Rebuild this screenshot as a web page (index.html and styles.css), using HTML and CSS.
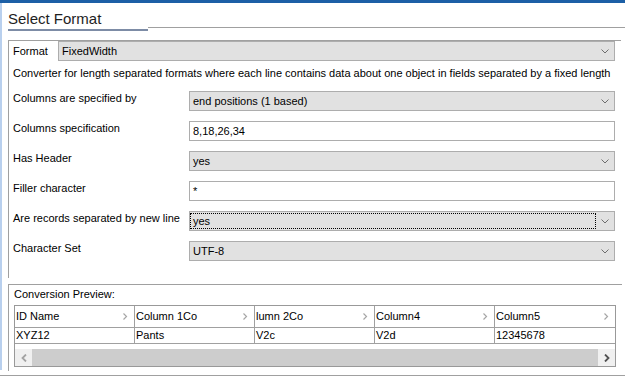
FILE: index.html
```html
<!DOCTYPE html>
<html lang="en">
<head>
    <meta charset="UTF-8">
    <title>Select Format</title>
    <link rel="stylesheet" href="styles.css">
</head>
<body>
    <div class="window">
        <div class="main">
            <div class="tabbar">
                <div class="tab">Select Format</div>
                <div class="tab-rest"></div>
            </div>

            <div class="panel">
                <div class="format-row">
                    <span class="format-label">Format</span>
                    <div class="select format-select">
                        <span class="value">FixedWidth</span>
                        <svg class="chev" width="8" height="5" viewBox="0 0 8 5"><polyline points="0.5,0.5 4,4 7.5,0.5" fill="none" stroke="#6d6d6d" stroke-width="1"/></svg>
                    </div>
                </div>
                <p class="desc">Converter for length separated formats where each line contains data about one object in fields separated by a fixed length</p>

                <div class="fields">
                    <span class="label">Columns are specified by</span>
                    <div class="select">
                        <span class="value">end positions (1 based)</span>
                        <svg class="chev" width="8" height="5" viewBox="0 0 8 5"><polyline points="0.5,0.5 4,4 7.5,0.5" fill="none" stroke="#6d6d6d" stroke-width="1"/></svg>
                    </div>

                    <span class="label">Columns specification</span>
                    <div class="input">8,18,26,34</div>

                    <span class="label">Has Header</span>
                    <div class="select">
                        <span class="value">yes</span>
                        <svg class="chev" width="8" height="5" viewBox="0 0 8 5"><polyline points="0.5,0.5 4,4 7.5,0.5" fill="none" stroke="#6d6d6d" stroke-width="1"/></svg>
                    </div>

                    <span class="label">Filler character</span>
                    <div class="input">*</div>

                    <span class="label">Are records separated by new line</span>
                    <div class="select focused">
                        <span class="value">yes</span>
                        <svg class="chev" width="8" height="5" viewBox="0 0 8 5"><polyline points="0.5,0.5 4,4 7.5,0.5" fill="none" stroke="#6d6d6d" stroke-width="1"/></svg>
                    </div>

                    <span class="label">Character Set</span>
                    <div class="select">
                        <span class="value">UTF-8</span>
                        <svg class="chev" width="8" height="5" viewBox="0 0 8 5"><polyline points="0.5,0.5 4,4 7.5,0.5" fill="none" stroke="#6d6d6d" stroke-width="1"/></svg>
                    </div>
                </div>
            </div>

            <div class="preview">
                <div class="preview-title">Conversion Preview:</div>
                <div class="grid">
                    <div class="row head">
                        <div class="cell">ID Name<svg class="arrow" width="5" height="7" viewBox="0 0 5 7"><polyline points="0.5,0.5 3.5,3.5 0.5,6.5" fill="none" stroke="#a6a6a6" stroke-width="1.2"/></svg></div>
                        <div class="cell">Column 1Co<svg class="arrow" width="5" height="7" viewBox="0 0 5 7"><polyline points="0.5,0.5 3.5,3.5 0.5,6.5" fill="none" stroke="#a6a6a6" stroke-width="1.2"/></svg></div>
                        <div class="cell">lumn 2Co<svg class="arrow" width="5" height="7" viewBox="0 0 5 7"><polyline points="0.5,0.5 3.5,3.5 0.5,6.5" fill="none" stroke="#a6a6a6" stroke-width="1.2"/></svg></div>
                        <div class="cell">Column4<svg class="arrow" width="5" height="7" viewBox="0 0 5 7"><polyline points="0.5,0.5 3.5,3.5 0.5,6.5" fill="none" stroke="#a6a6a6" stroke-width="1.2"/></svg></div>
                        <div class="cell">Column5<svg class="arrow" width="5" height="7" viewBox="0 0 5 7"><polyline points="0.5,0.5 3.5,3.5 0.5,6.5" fill="none" stroke="#a6a6a6" stroke-width="1.2"/></svg></div>
                    </div>
                    <div class="row data">
                        <div class="cell">XYZ12</div>
                        <div class="cell">Pants</div>
                        <div class="cell">V2c</div>
                        <div class="cell">V2d</div>
                        <div class="cell">12345678</div>
                    </div>
                    <div class="hscroll">
                        <span class="sbtn"><svg width="6" height="8" viewBox="0 0 6 8"><polyline points="5,0.5 1.5,4 5,7.5" fill="none" stroke="#a3a3a3" stroke-width="1.8"/></svg></span>
                        <span class="track"></span>
                        <span class="sbtn"><svg width="6" height="8" viewBox="0 0 6 8"><polyline points="1,0.5 4.5,4 1,7.5" fill="none" stroke="#505050" stroke-width="1.8"/></svg></span>
                    </div>
                </div>
            </div>
        </div>
        <div class="bottom-line"></div>
    </div>
</body>
</html>
```

FILE: styles.css
```css
body {
    margin: 0;
    background: #ffffff;
    font-family: "Liberation Sans", Arial, sans-serif;
    font-size: 11px;
    color: #000000;
}

.window {
    width: 625px;
    height: 377px;
    border-top: 3px solid #1c5fa6;
    box-sizing: border-box;
    overflow: hidden;
}

.main {
    height: 367px;
    border-left: 2px solid #b9d0ee;
    padding-left: 6px;
    box-sizing: border-box;
}

/* tab header */
.tabbar {
    display: flex;
    align-items: flex-end;
    height: 28px;
}

.tab {
    width: 140px;
    font-size: 15px;
    line-height: 20px;
    color: #1e1e1e;
    border-bottom: 2px solid #7d8ca6;
}

.tab-rest {
    flex: 1;
    border-bottom: 1px solid #a0a0a0;
    margin-bottom: 3px;
}

/* settings panel */
.panel {
    margin-top: 9px;
    margin-right: 4px;
    height: 238px;
    border-top: 1px solid #a0a0a0;
    border-left: 1px solid #a0a0a0;
    padding: 0 6px 0 4px;
    box-sizing: border-box;
}

.format-row {
    display: flex;
    align-items: center;
}

.format-label {
    width: 45px;
}

.format-select {
    flex: 1;
    height: 19px;
}

.desc {
    margin: 6px 0 0;
    line-height: 13px;
}

.fields {
    display: grid;
    grid-template-columns: 176px 1fr;
    row-gap: 10px;
    margin-top: 11px;
}

.label {
    line-height: 14px;
}

.select {
    display: flex;
    align-items: center;
    height: 20px;
    border: 1px solid #adadad;
    background: #e1e1e1;
    box-sizing: border-box;
}

.select .value {
    flex: 1;
    padding-left: 3px;
    line-height: 14px;
}

.select .chev {
    margin: 0 5px 0 6px;
}

.select.focused .value {
    margin: 1px 0 1px 1px;
    padding-left: 2px;
    outline: 1px dotted #000000;
}

.input {
    height: 20px;
    border: 1px solid #adadad;
    background: #ffffff;
    box-sizing: border-box;
    padding-left: 3px;
    line-height: 18px;
}

/* preview */
.preview {
    margin-top: 6px;
    margin-right: 3px;
    height: 86px;
    border-top: 1px solid #a0a0a0;
    border-left: 1px solid #a0a0a0;
    padding-left: 5px;
    padding-right: 7px;
}

.preview-title {
    line-height: 14px;
    padding-top: 2px;
}

.grid {
    margin-top: 4px;
    width: 602px;
    border: 1px solid #999999;
    box-sizing: border-box;
}

.row {
    display: grid;
    grid-template-columns: 120px 120px 120px 120px 120px;
}

.row .cell {
    position: relative;
    border-right: 1px solid #a0a0a0;
    padding-left: 1px;
    white-space: nowrap;
    overflow: hidden;
}

.row .cell:last-child {
    border-right: none;
}

.head {
    height: 21px;
    border-bottom: 1px solid #a0a0a0;
}

.head .cell {
    line-height: 21px;
}

.arrow {
    position: absolute;
    right: 6px;
    top: 7px;
}

.data {
    height: 15px;
    border-bottom: 1px solid #a0a0a0;
}

.data .cell {
    line-height: 15px;
}

.hscroll {
    display: flex;
    height: 17px;
    margin-top: 5px;
}

.sbtn {
    width: 17px;
    background: #f0f0f0;
    display: flex;
    align-items: center;
    justify-content: center;
}

.track {
    flex: 1;
    background: #cdcdcd;
}

.bottom-line {
    margin-top: 5px;
    border-top: 1px solid #a0a0a0;
}
```
